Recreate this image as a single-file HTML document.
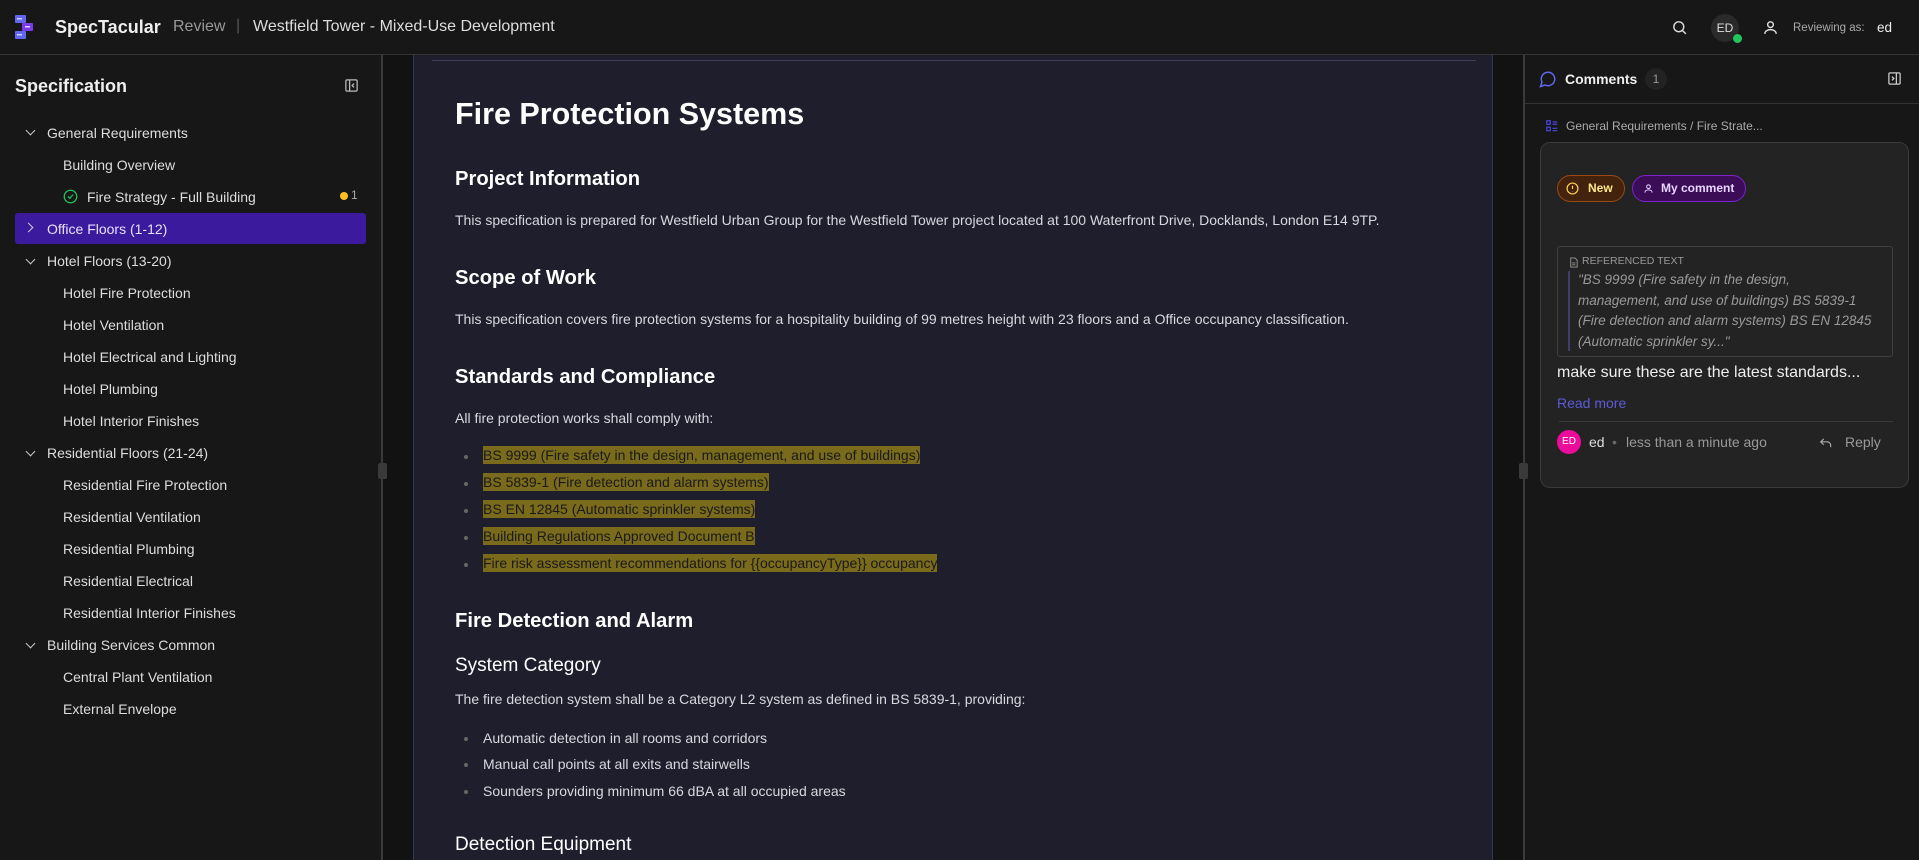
<!DOCTYPE html>
<html><head><meta charset="utf-8"><style>
*{box-sizing:border-box;margin:0;padding:0}
body{width:1919px;height:860px;overflow:hidden;background:#121212;font-family:"Liberation Sans",sans-serif;color:#e6e6e6;position:relative}
.abs{position:absolute;white-space:nowrap}
#hdr{position:absolute;left:0;top:0;width:1919px;height:55px;background:#171717;border-bottom:1px solid #333}
#side{position:absolute;left:0;top:55px;width:383px;height:805px;background:#171717;border-right:2px solid #3a3a3a}
#gut{position:absolute;left:383px;top:55px;width:1141px;height:805px;background:#121212}
#doc{position:absolute;left:413px;top:55px;width:1080px;height:805px;background:#1e1e2d;border-left:1px solid #33375a;border-right:1px solid #33375a}
#rp{position:absolute;left:1523px;top:55px;width:396px;height:805px;background:#171717;border-left:2px solid #3a3a3a}
.ti{position:absolute;font-size:14px;color:#ddd;white-space:nowrap}
.chev{position:absolute;width:7px;height:7px;border-right:1.6px solid #ccc;border-bottom:1.6px solid #ccc}
.d{position:absolute;left:455px;white-space:nowrap;color:#d8d8de}
.h2{font-size:20.2px;font-weight:bold;color:#fff}
.p{font-size:14px}
.li{font-size:14px;left:483px}
.hl{background:#7a6a1c;color:#1a1a1a;padding:1px 0}
.bul{position:absolute;left:464px;width:4px;height:4px;border-radius:50%;background:#666}
</style></head><body>
<div id="hdr">
 <svg class="abs" style="left:15px;top:15px" width="20" height="24" viewBox="0 0 20 24"><rect x="0" y="0" width="11" height="8" rx="1" fill="#6366f1"/><rect x="7" y="8" width="11" height="8" rx="1" fill="#7c3aed"/><rect x="0" y="16" width="11" height="8" rx="1" fill="#6366f1"/><rect x="2" y="3" width="5" height="1.5" fill="#c7d2fe"/><rect x="10" y="11" width="5" height="1.5" fill="#ddd6fe"/><rect x="2" y="19" width="5" height="1.5" fill="#c7d2fe"/></svg>
 <div class="abs" style="left:55px;top:17px;font-size:18px;font-weight:bold;color:#eee">SpecTacular</div>
 <div class="abs" style="left:173px;top:18px;font-size:16px;color:#999">Review</div>
 <div class="abs" style="left:236px;top:17px;font-size:16px;color:#555">|</div>
 <div class="abs" style="left:253px;top:18px;font-size:16px;color:#ddd">Westfield Tower - Mixed-Use Development</div>
 <svg class="abs" style="left:1671px;top:19px" width="17" height="17" viewBox="0 0 24 24" fill="none" stroke="#ddd" stroke-width="2"><circle cx="11" cy="11" r="7"/><path d="M16 16l5 5"/></svg>
 <div class="abs" style="left:1711px;top:14px;width:28px;height:28px;border-radius:50%;background:#2a2a2a;font-size:12px;color:#ddd;text-align:center;line-height:28px">ED</div>
 <div class="abs" style="left:1733px;top:34px;width:9px;height:9px;border-radius:50%;background:#22c55e"></div>
 <svg class="abs" style="left:1762px;top:19px" width="17" height="17" viewBox="0 0 24 24" fill="none" stroke="#ddd" stroke-width="2"><circle cx="12" cy="8" r="4"/><path d="M4 21c0-4 4-6 8-6s8 2 8 6"/></svg>
 <div class="abs" style="left:1793px;top:21px;font-size:11.5px;line-height:14px;color:#aaa">Reviewing as:</div>
 <div class="abs" style="left:1877px;top:19px;font-size:13.5px;line-height:17px;color:#eee">ed</div>
</div>
<div id="side">
 <div class="abs" style="left:15px;top:21px;font-size:18px;font-weight:bold;color:#eee">Specification</div>
 <svg class="abs" style="left:344px;top:23px" width="15" height="15" viewBox="0 0 24 24" fill="none" stroke="#bbb" stroke-width="2"><rect x="3" y="3" width="18" height="18" rx="2"/><path d="M9 3v18M16 9l-3 3 3 3"/></svg>
 <div class="abs" style="left:15px;top:158px;width:351px;height:31px;background:#3b1a9e;border-radius:3px"></div>
</div>
<div id="gut"></div>
<div id="doc"><div class="abs" style="left:18px;top:5px;width:1044px;height:1px;background:#3a3d55"></div></div>
<div id="rp">
 <div class="abs" style="left:0;top:48px;width:396px;height:1px;background:#333"></div>
 <svg class="abs" style="left:14px;top:15px" width="18" height="18" viewBox="0 0 24 24" fill="none" stroke="#6366f1" stroke-width="2"><path d="M7.9 20A9 9 0 1 0 4 16.1L2 22z"/></svg>
 <div class="abs" style="left:40px;top:16px;font-size:14px;font-weight:bold;color:#eee">Comments</div>
 <div class="abs" style="left:120px;top:13px;width:22px;height:22px;border-radius:50%;background:#222;font-size:12px;color:#999;text-align:center;line-height:22px">1</div>
 <svg class="abs" style="left:362px;top:16px" width="15" height="15" viewBox="0 0 24 24" fill="none" stroke="#ccc" stroke-width="2"><rect x="3" y="3" width="18" height="18" rx="2"/><path d="M15 3v18M8 9l3 3-3 3"/></svg>
 <svg class="abs" style="left:20px;top:64px" width="14" height="14" viewBox="0 0 24 24" fill="none" stroke="#4f46e5" stroke-width="2"><rect x="3" y="3" width="6" height="6"/><rect x="3" y="14" width="6" height="6"/><path d="M13 5h8M13 9h8M13 16h8M13 20h8"/></svg>
 <div class="abs" style="left:41px;top:64px;font-size:12px;color:#aaa">General Requirements / Fire Strate...</div>
 <div class="abs" style="left:15px;top:87px;width:369px;height:346px;background:#232323;border:1px solid #3a3a3a;border-radius:10px"></div>
 <div class="abs" style="left:32px;top:120px;width:68px;height:27px;border-radius:14px;background:#43230e;border:1px solid #9a4a14"></div>
 <svg class="abs" style="left:41px;top:127px" width="13" height="13" viewBox="0 0 24 24" fill="none" stroke="#fcd34d" stroke-width="2.2"><circle cx="12" cy="12" r="10"/><path d="M12 7v6M12 16.5v.5"/></svg>
 <div class="abs" style="left:63px;top:126px;font-size:12px;font-weight:bold;color:#fde68a">New</div>
 <div class="abs" style="left:107px;top:120px;width:114px;height:27px;border-radius:14px;background:#3b0d57;border:1px solid #7e22ce"></div>
 <svg class="abs" style="left:118px;top:128px" width="11" height="11" viewBox="0 0 24 24" fill="none" stroke="#e9d5ff" stroke-width="2.2"><circle cx="12" cy="8" r="4"/><path d="M4 21c0-4 4-6 8-6s8 2 8 6"/></svg>
 <div class="abs" style="left:136px;top:126px;font-size:12px;font-weight:bold;color:#e9d5ff">My comment</div>
 <div class="abs" style="left:32px;top:191px;width:336px;height:111px;border:1px solid #3f3f3f;border-radius:3px"></div>
 <svg class="abs" style="left:43px;top:202px" width="11" height="11" viewBox="0 0 24 24" fill="none" stroke="#999" stroke-width="2"><path d="M6 2h9l5 5v15H6z M9 13h7M9 17h7"/></svg>
 <div class="abs" style="left:57px;top:200px;font-size:10.5px;color:#999">REFERENCED TEXT</div>
 <div class="abs" style="left:43px;top:216px;width:2px;height:80px;background:#3f3f6a"></div>
 <div class="abs" style="left:53px;top:215px;font-size:13.5px;font-style:italic;color:#9a9a9a;line-height:20.5px;white-space:normal;width:296px">"BS 9999 (Fire safety in the design, management, and use of buildings) BS 5839-1 (Fire detection and alarm systems) BS EN 12845 (Automatic sprinkler sy..."</div>
 <div class="abs" style="left:32px;top:309px;font-size:16px;color:#eee">make sure these are the latest standards...</div>
 <div class="abs" style="left:32px;top:340px;font-size:14px;color:#5b5bd6">Read more</div>
 <div class="abs" style="left:34px;top:366px;width:334px;height:1px;background:#3a3a3a"></div>
 <div class="abs" style="left:32px;top:375px;width:24px;height:24px;border-radius:50%;background:#ec0c9c;font-size:10px;color:#fff;text-align:center;line-height:24px">ED</div>
 <div class="abs" style="left:64px;top:379px;font-size:14px;color:#ddd">ed</div>
 <div class="abs" style="left:87px;top:379px;font-size:14px;color:#666">•</div>
 <div class="abs" style="left:101px;top:379px;font-size:14px;color:#999">less than a minute ago</div>
 <svg class="abs" style="left:294px;top:382px" width="14" height="12" viewBox="0 0 24 20" fill="none" stroke="#aaa" stroke-width="2"><path d="M8 3L3 8l5 5M3 8h11a6 6 0 0 1 6 6v3"/></svg>
 <div class="abs" style="left:320px;top:379px;font-size:14px;color:#999">Reply</div>
</div>
<div class="abs" style="left:378px;top:463px;width:9px;height:16px;background:#3a3a3a;border-radius:2px"></div>
<div class="abs" style="left:1519px;top:463px;width:9px;height:16px;background:#3a3a3a;border-radius:2px"></div>

<!-- tree -->
<div class="chev" style="left:27px;top:127px;transform:rotate(45deg)"></div>
<div class="ti" style="left:47px;top:125px">General Requirements</div>
<div class="ti" style="left:63px;top:157px">Building Overview</div>
<svg class="abs" style="left:63px;top:189px" width="15" height="15" viewBox="0 0 24 24" fill="none" stroke="#22c55e" stroke-width="2"><circle cx="12" cy="12" r="10"/><path d="M8 12l3 3 5-6"/></svg>
<div class="ti" style="left:87px;top:189px">Fire Strategy - Full Building</div>
<div class="abs" style="left:340px;top:192px;width:8px;height:8px;border-radius:50%;background:#fbbf24"></div>
<div class="ti" style="left:351px;top:188px;font-size:12px;color:#aaa">1</div>
<div class="chev" style="left:25px;top:224px;transform:rotate(-45deg)"></div>
<div class="ti" style="left:47px;top:221px;color:#e8e0ff">Office Floors (1-12)</div>
<div class="chev" style="left:27px;top:256px;transform:rotate(45deg)"></div>
<div class="ti" style="left:47px;top:253px">Hotel Floors (13-20)</div>
<div class="ti" style="left:63px;top:285px">Hotel Fire Protection</div>
<div class="ti" style="left:63px;top:317px">Hotel Ventilation</div>
<div class="ti" style="left:63px;top:349px">Hotel Electrical and Lighting</div>
<div class="ti" style="left:63px;top:381px">Hotel Plumbing</div>
<div class="ti" style="left:63px;top:413px">Hotel Interior Finishes</div>
<div class="chev" style="left:27px;top:448px;transform:rotate(45deg)"></div>
<div class="ti" style="left:47px;top:445px">Residential Floors (21-24)</div>
<div class="ti" style="left:63px;top:477px">Residential Fire Protection</div>
<div class="ti" style="left:63px;top:509px">Residential Ventilation</div>
<div class="ti" style="left:63px;top:541px">Residential Plumbing</div>
<div class="ti" style="left:63px;top:573px">Residential Electrical</div>
<div class="ti" style="left:63px;top:605px">Residential Interior Finishes</div>
<div class="chev" style="left:27px;top:640px;transform:rotate(45deg)"></div>
<div class="ti" style="left:47px;top:637px">Building Services Common</div>
<div class="ti" style="left:63px;top:669px">Central Plant Ventilation</div>
<div class="ti" style="left:63px;top:701px">External Envelope</div>

<!-- doc -->
<div class="d" style="top:97px;font-size:30.5px;font-weight:bold;color:#fff">Fire Protection Systems</div>
<div class="d h2" style="top:168px">Project Information</div>
<div class="d p" style="top:212px">This specification is prepared for Westfield Urban Group for the Westfield Tower project located at 100 Waterfront Drive, Docklands, London E14 9TP.</div>
<div class="d h2" style="top:267px">Scope of Work</div>
<div class="d p" style="top:311px">This specification covers fire protection systems for a hospitality building of 99 metres height with 23 floors and a Office occupancy classification.</div>
<div class="d h2" style="top:366px">Standards and Compliance</div>
<div class="d p" style="top:410px">All fire protection works shall comply with:</div>
<div class="bul" style="top:455px"></div><div class="d li" style="top:447px"><span class="hl">BS 9999 (Fire safety in the design, management, and use of buildings)</span></div>
<div class="bul" style="top:482px"></div><div class="d li" style="top:474px"><span class="hl">BS 5839-1 (Fire detection and alarm systems)</span></div>
<div class="bul" style="top:509px"></div><div class="d li" style="top:501px"><span class="hl">BS EN 12845 (Automatic sprinkler systems)</span></div>
<div class="bul" style="top:536px"></div><div class="d li" style="top:528px"><span class="hl">Building Regulations Approved Document B</span></div>
<div class="bul" style="top:563px"></div><div class="d li" style="top:555px"><span class="hl">Fire risk assessment recommendations for {{occupancyType}} occupancy</span></div>
<div class="d h2" style="top:610px">Fire Detection and Alarm</div>
<div class="d" style="top:655px;font-size:19px;color:#fff">System Category</div>
<div class="d p" style="top:691px">The fire detection system shall be a Category L2 system as defined in BS 5839-1, providing:</div>
<div class="bul" style="top:737px"></div><div class="d li" style="top:730px">Automatic detection in all rooms and corridors</div>
<div class="bul" style="top:763px"></div><div class="d li" style="top:756px">Manual call points at all exits and stairwells</div>
<div class="bul" style="top:790px"></div><div class="d li" style="top:783px">Sounders providing minimum 66 dBA at all occupied areas</div>
<div class="d" style="top:834px;font-size:19px;color:#fff">Detection Equipment</div>
</body></html>
